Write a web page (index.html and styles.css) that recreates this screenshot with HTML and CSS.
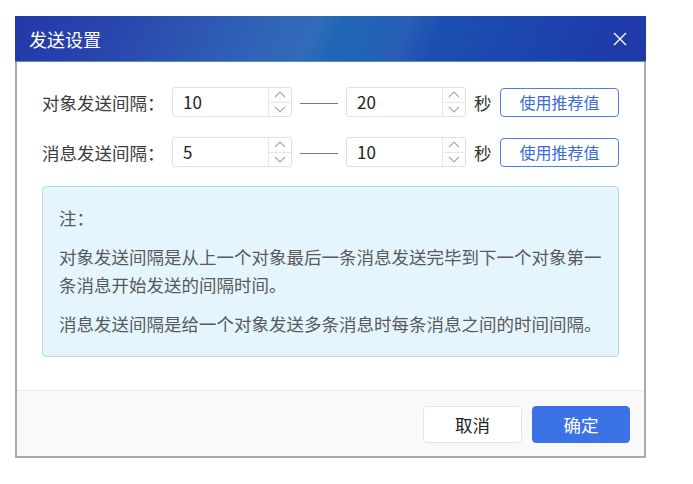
FILE: index.html
```html
<!DOCTYPE html>
<html lang="zh-CN">
<head>
<meta charset="utf-8">
<title>发送设置</title>
<link rel="stylesheet" href="styles.css">
</head>
<body>
<div class="dialog">
  <div class="titlebar">
    <span class="title">发送设置</span>
    <button class="close" aria-label="关闭">
      <svg width="14" height="14" viewBox="0 0 14 14"><path d="M1 1 L13 13 M13 1 L1 13" stroke="#ffffff" stroke-width="1.4" fill="none"/></svg>
    </button>
  </div>
  <div class="frame">
    <div class="content">
      <div class="row">
        <span class="label">对象发送间隔：</span>
        <div class="num">
          <span class="val">10</span>
          <div class="spin">
            <span class="up"><svg width="12" height="7" viewBox="0 0 12 7"><path d="M1 6 L6 1 L11 6" stroke="#a8a8a8" stroke-width="1.1" fill="none"/></svg></span>
            <span class="down"><svg width="12" height="7" viewBox="0 0 12 7"><path d="M1 1 L6 6 L11 1" stroke="#a8a8a8" stroke-width="1.1" fill="none"/></svg></span>
          </div>
        </div>
        <span class="dash"></span>
        <div class="num">
          <span class="val">20</span>
          <div class="spin">
            <span class="up"><svg width="12" height="7" viewBox="0 0 12 7"><path d="M1 6 L6 1 L11 6" stroke="#a8a8a8" stroke-width="1.1" fill="none"/></svg></span>
            <span class="down"><svg width="12" height="7" viewBox="0 0 12 7"><path d="M1 1 L6 6 L11 1" stroke="#a8a8a8" stroke-width="1.1" fill="none"/></svg></span>
          </div>
        </div>
        <span class="unit">秒</span>
        <button class="rec">使用推荐值</button>
      </div>
      <div class="row">
        <span class="label">消息发送间隔：</span>
        <div class="num">
          <span class="val">5</span>
          <div class="spin">
            <span class="up"><svg width="12" height="7" viewBox="0 0 12 7"><path d="M1 6 L6 1 L11 6" stroke="#a8a8a8" stroke-width="1.1" fill="none"/></svg></span>
            <span class="down"><svg width="12" height="7" viewBox="0 0 12 7"><path d="M1 1 L6 6 L11 1" stroke="#a8a8a8" stroke-width="1.1" fill="none"/></svg></span>
          </div>
        </div>
        <span class="dash"></span>
        <div class="num">
          <span class="val">10</span>
          <div class="spin">
            <span class="up"><svg width="12" height="7" viewBox="0 0 12 7"><path d="M1 6 L6 1 L11 6" stroke="#a8a8a8" stroke-width="1.1" fill="none"/></svg></span>
            <span class="down"><svg width="12" height="7" viewBox="0 0 12 7"><path d="M1 1 L6 6 L11 1" stroke="#a8a8a8" stroke-width="1.1" fill="none"/></svg></span>
          </div>
        </div>
        <span class="unit">秒</span>
        <button class="rec">使用推荐值</button>
      </div>
      <div class="note">
        <p>注：</p>
        <p>对象发送间隔是从上一个对象最后一条消息发送完毕到下一个对象第一条消息开始发送的间隔时间。</p>
        <p>消息发送间隔是给一个对象发送多条消息时每条消息之间的时间间隔。</p>
      </div>
    </div>
    <div class="footer">
      <button class="btn cancel">取消</button>
      <button class="btn ok">确定</button>
    </div>
  </div>
</div>
</body>
</html>
```

FILE: styles.css
```css
html, body {
  margin: 0;
  background: #ffffff;
}
body {
  padding: 16px 0 0 15px;
  font-family: "Noto Sans CJK SC", "Microsoft YaHei", "Noto Sans", sans-serif;
  color: #333333;
}
.dialog {
  width: 631px;
}
.titlebar {
  height: 46px;
  box-sizing: border-box;
  display: flex;
  align-items: center;
  justify-content: space-between;
  padding: 0 19px 0 14px;
  border-bottom: 1px solid #5b88cf;
  background: linear-gradient(112deg, #2338a7 0%, #2946ad 16%, #2d58b3 30%, #3065b7 40%, #316bb8 47%, #1f66b6 51%, #2361b5 58%, #2a5db5 61%, #1c4fb1 66%, #1c44ad 82%, #1f38a8 100%);
}
.title {
  color: #ffffff;
  font-size: 18px;
  line-height: 1;
}
.close {
  border: 0;
  background: none;
  padding: 0;
  width: 14px;
  height: 14px;
  display: flex;
}
.frame {
  border: 2px solid #a9a9a9;
  border-top: 0;
}
.content {
  padding: 25px 25px 33px 25px;
}
.row {
  display: flex;
  align-items: center;
  height: 30px;
  margin-bottom: 20px;
}
.label {
  width: 130px;
  font-size: 17.5px;
  color: #3c3c3c;
}
.num {
  width: 120px;
  height: 30px;
  box-sizing: border-box;
  border: 1px solid #e0e0e0;
  border-radius: 3px;
  display: flex;
  background: #fff;
}
.val {
  flex: 1;
  padding-left: 10px;
  font-size: 17px;
  line-height: 28px;
  color: #222;
}
.spin {
  width: 22px;
  border-left: 1px solid #e6e6e6;
  display: flex;
  flex-direction: column;
}
.spin span {
  flex: 1;
  display: flex;
  align-items: center;
  justify-content: center;
}
.spin .up {
  border-bottom: 1px solid #e6e6e6;
}
.dash {
  width: 38px;
  height: 1px;
  background: #7a7a7a;
  margin: 2px 8px 0 8px;
}
.unit {
  font-size: 17.5px;
  margin: 0 8px 0 8px;
  color: #333;
}
.rec {
  width: 119px;
  height: 29px;
  margin-left: auto;
  box-sizing: border-box;
  border: 1px solid #4d7fe3;
  border-radius: 4px;
  background: #ffffff;
  color: #3a6bd6;
  font-family: inherit;
  font-size: 16px;
  padding: 0;
}
.note {
  margin-top: -1px;
  border: 1px solid #b8d7ea;
  border-radius: 4px;
  background: #e4f5fd;
  padding: 17px 16px 18px 16px;
  color: #5a5a5a;
  font-size: 17.5px;
  line-height: 28px;
}
.note p {
  margin: 0 0 11px 0;
}
.note p:last-child {
  margin-bottom: 0;
}
.footer {
  height: 66px;
  box-sizing: border-box;
  border-top: 1px solid #e8e8e8;
  background: #f9f9f9;
  display: flex;
  justify-content: flex-end;
  align-items: flex-start;
  gap: 10px;
  padding: 15px 14px 0 0;
}
.btn {
  height: 37px;
  border-radius: 4px;
  font-family: inherit;
  font-size: 17.5px;
  padding: 0;
  box-sizing: border-box;
}
.cancel {
  width: 99px;
  background: #ffffff;
  border: 1px solid #e4e4e4;
  color: #222222;
}
.ok {
  width: 98px;
  background: #3b73e6;
  border: 1px solid #3b73e6;
  color: #ffffff;
}
```
